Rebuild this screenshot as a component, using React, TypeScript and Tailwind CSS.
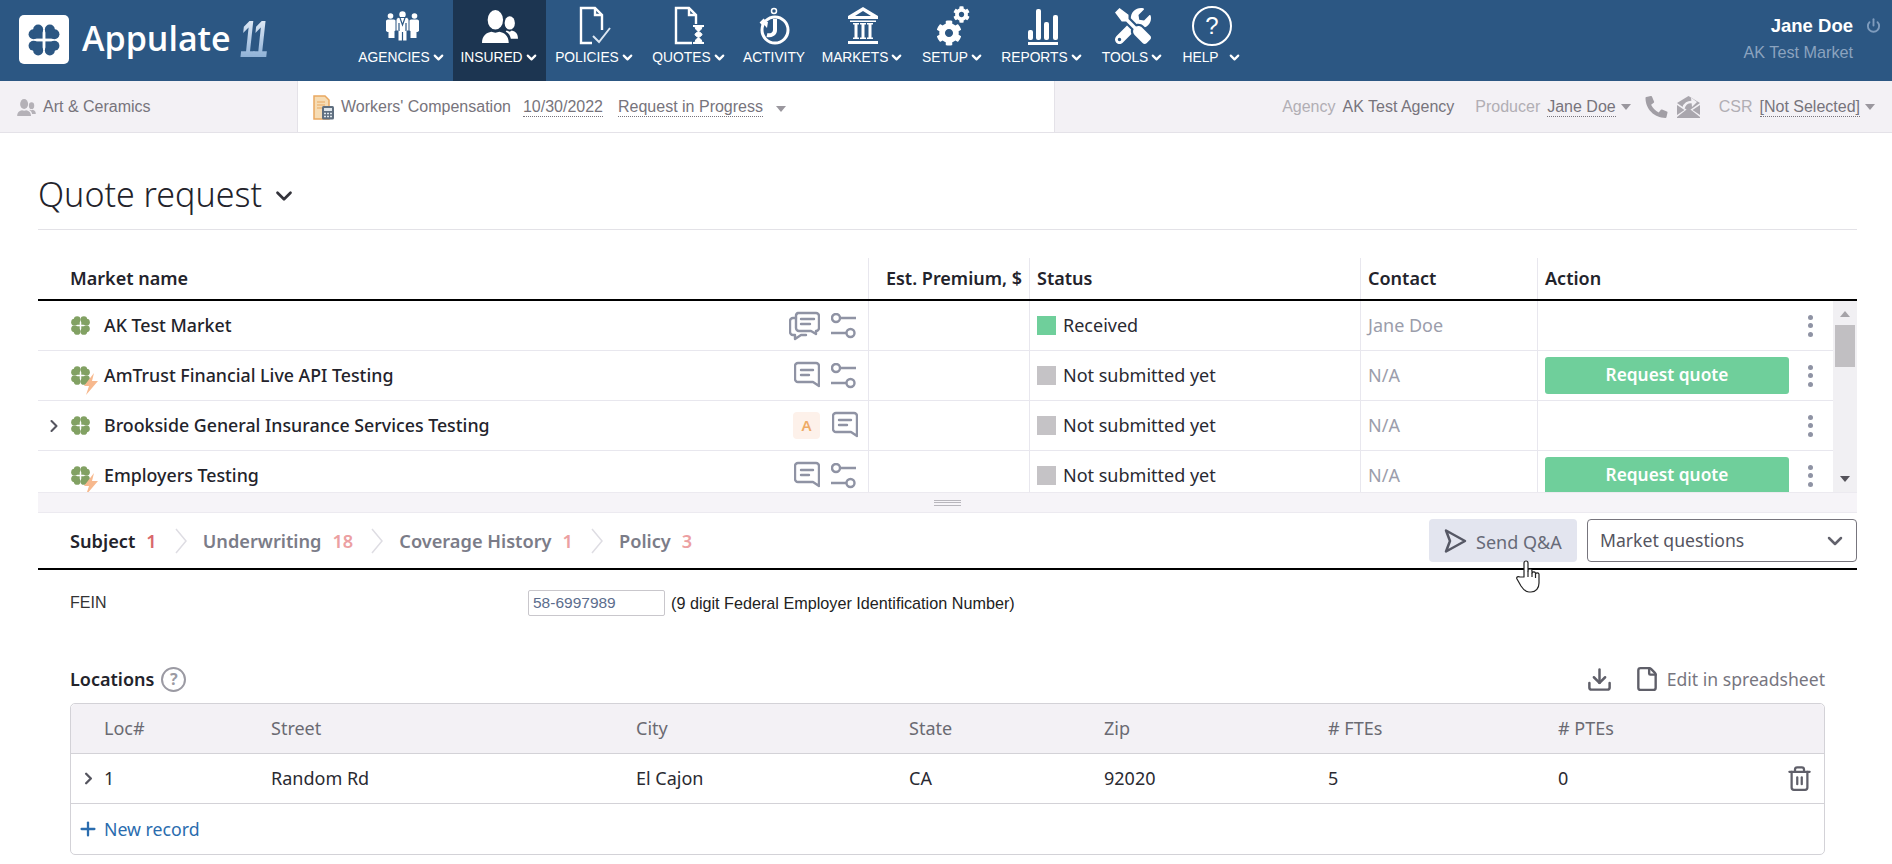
import React from 'react';
import { ChevronDown, ChevronRight, Download, File, Plus, Power, Trash2 } from 'lucide-react';
import { FaCog, FaTools, FaPhoneAlt } from 'react-icons/fa';

function Clover({ size, fill, gap = 0, r = 6 }: { size: number; fill: string; gap?: number; r?: number }) {
  return (
    <svg width={size} height={size} viewBox="0 0 48 48">
      {[0, 90, 180, 270].map((a) => (
        <g key={a} transform={`rotate(${a} 24 24)`} fill={fill}>
          <circle cx="11.5" cy="17" r={r} />
          <circle cx="17" cy="11.5" r={r} />
          <rect x="11.5" y="11.5" width={11.5 - gap} height={11.5 - gap} />
        </g>
      ))}
    </svg>
  );
}

function PeopleIcon({ className }: { className: string }) {
  return (
    <svg viewBox="0 0 35 32" fill="currentColor" className={className}>
      <ellipse cx="13" cy="9.500" rx="7.500" ry="9.500" />
      <path d="M0 32c0-8 5-10 9-11l4 1 4-1c4 1 9 3 9 11z" />
      <ellipse cx="27" cy="12.500" rx="5" ry="6.500" />
      <path d="M24 20l3 1 2-1c3 1 6 2 6 8h-7c-.5-3-2-6-5-7z" />
    </svg>
  );
}

function PolicyIcon() {
  return (
    <svg width="34" height="40" viewBox="0 0 34 40" fill="none" stroke="#fff" strokeWidth="2.4">
      <path d="M14 37H3V2h14l7 7v15" />
      <path d="M17 2v7h7" />
      <path d="M15 30l6 6 11-14" strokeWidth="2" stroke="#dbe6f2" />
    </svg>
  );
}

function QuoteIcon() {
  return (
    <svg width="34" height="40" viewBox="0 0 34 40" fill="none" stroke="#fff" strokeWidth="2.4">
      <path d="M19 37H3V2h13l7 7v9" />
      <path d="M16 2v7h7" />
      <path d="M20 20h11M20 37h11" strokeWidth="2" />
      <path d="M22 20c0 6 7 6 7 8.500s-7 2.500-7 8.500h7c0-6-7-6-7-8.500s7-2.500 7-8.500z" fill="#fff" strokeWidth="1" />
    </svg>
  );
}

function ActivityIcon() {
  return (
    <svg width="34" height="40" viewBox="0 0 34 40" fill="none" stroke="#fff" strokeWidth="3">
      <circle cx="17" cy="4" r="2.500" strokeWidth="1.500" />
      <circle cx="18" cy="23" r="13" />
      <path d="M8 13l-4 4M18 12v11c0 4-4 6-8 5" strokeWidth="4" />
      <path d="M4 14l7 1-1 6z" fill="#fff" stroke="none" />
    </svg>
  );
}

function MarketIcon() {
  return (
    <svg width="32" height="40" viewBox="0 0 32 40" fill="#fff">
      <path d="M16 1L1 10v3h30v-3zM16 5l8 5H8z" fillRule="evenodd" />
      <rect x="3" y="14.500" width="26" height="1.500" />
      <path d="M6 17h6v1.500h-1.500v13H12V33H6v-1.500h1.500v-13H6zM13 17h6v1.500h-1.500v13H19V33h-6v-1.500h1.500v-13H13zM20 17h6v1.500h-1.500v13H26V33h-6v-1.500h1.500v-13H20z" />
      <rect x="1" y="35" width="30" height="3" />
    </svg>
  );
}

function SetupIcon() {
  return (
    <div className="relative h-10 w-[34px]">
      <FaCog className="absolute bottom-0 left-0 h-[26px] w-[26px] text-white" />
      <FaCog className="absolute right-0 top-0 h-[17px] w-[17px] text-white" />
    </div>
  );
}

function ReportIcon() {
  return (
    <svg width="34" height="40" viewBox="0 0 34 40" fill="#fff">
      <rect x="2" y="36" width="30" height="3" />
      <rect x="2" y="24" width="5" height="10" rx="2" />
      <rect x="10" y="3" width="5" height="31" rx="2" />
      <rect x="18" y="16" width="5" height="18" rx="2" />
      <rect x="27" y="9" width="5" height="25" rx="2" />
    </svg>
  );
}

function HelpIcon() {
  return (
    <div className="flex h-10 w-10 items-center justify-center rounded-full border-[2.5px] border-white font-['Liberation_Sans',sans-serif] text-[24px] leading-none text-white">
      ?
    </div>
  );
}

function AgencyIcon() {
  const side = (
    <g>
      <circle cx="5.500" cy="5" r="2.800" />
      <path d="M1 11a2 2 0 0 1 2-2.500h6l2 1v10l-1.500.5v7H3.500v-6H2.500L1 20z" />
    </g>
  );
  return (
    <svg width="35" height="30" viewBox="0 0 35 30" fill="#fff">
      {side}
      <g transform="translate(35 0) scale(-1 1)">{side}</g>
      <circle cx="17.500" cy="3.500" r="3.200" />
      <path d="M11 9a2.500 2.500 0 0 1 2.500-2.500h8A2.500 2.500 0 0 1 24 9v11h-2v10h-9V20h-2z" stroke="#2c5783" strokeWidth="1" />
      <path d="M15 7l2.500 7 2.500-7M14 12v8M21 12v8M17.500 21v9" fill="none" stroke="#2c5783" strokeWidth="1.200" />
    </svg>
  );
}

const navItems = [
  { label: 'AGENCIES', w: 'w-[102px]', icon: <AgencyIcon />, arrow: true },
  { label: 'INSURED', w: 'w-[93px]', icon: <PeopleIcon className="h-[33px] w-[36px] text-white" />, arrow: true, active: true },
  { label: 'POLICIES', w: 'w-[98px]', icon: <PolicyIcon />, arrow: true },
  { label: 'QUOTES', w: 'w-[91px]', icon: <QuoteIcon />, arrow: true },
  { label: 'ACTIVITY', w: 'w-[78px]', icon: <ActivityIcon />, arrow: false },
  { label: 'MARKETS', w: 'w-[100px]', icon: <MarketIcon />, arrow: true },
  { label: 'SETUP', w: 'w-[80px]', icon: <SetupIcon />, arrow: true },
  { label: 'REPORTS', w: 'w-[99px]', icon: <ReportIcon />, arrow: true },
  { label: 'TOOLS', w: 'w-[82px]', icon: <FaTools className="h-[38px] w-[36px] text-white" />, arrow: true },
  { label: 'HELP', w: 'w-[76px]', icon: <HelpIcon />, arrow: true },
];

function TopBar() {
  return (
    <header className="flex h-[81px] bg-[#2c5783] font-['Liberation_Sans',sans-serif]">
      <div className="flex w-[351px] items-center pl-[19px]">
        <div className="mb-[2px] flex h-[49px] w-[50px] items-center justify-center rounded-[5px] bg-white">
          <Clover size={40} fill="#2c5783" gap={0.7} />
        </div>
        <span className="mb-[6px] ml-[13px] font-['Open_Sans',sans-serif] text-[34px] font-semibold leading-none text-white">Appulate</span>
        <span className="-mr-[22px] mb-[4px] ml-[9px] inline-block w-[56px] origin-left scale-x-[0.56] bg-gradient-to-b from-[#eef4fb] to-[#7fa6d0] bg-clip-text pr-[4px] font-['Liberation_Sans',sans-serif] text-[52px] font-bold italic leading-none tracking-[-3px] text-transparent">
          11
        </span>
      </div>
      <nav className="flex">
        {navItems.map((item) => (
          <div key={item.label} className={`flex ${item.w} flex-col items-center justify-end pb-[16px] ${item.active ? 'bg-[#1c3551]' : ''}`}>
            <div className="mb-[4px] flex h-10 items-center justify-center">{item.icon}</div>
            <div className="flex items-center text-[13.8px] leading-none text-white">
              {item.label}
              {item.arrow && <ChevronDown className={`h-[15px] w-[15px] ${item.label === 'HELP' ? 'ml-[8px]' : 'ml-[1px]'}`} strokeWidth={3.5} />}
            </div>
          </div>
        ))}
      </nav>
      <div className="ml-auto flex flex-col items-end pr-[39px] pt-[13px]">
        <div className="relative text-[18.500px] font-bold leading-[26px] text-white">
          Jane Doe
          <Power className="absolute -right-[28px] top-[5px] h-[15px] w-[15px] text-[#7f9cbd]" strokeWidth={3} />
        </div>
        <div className="mt-[2px] text-[16.200px] leading-[22px] text-[#8ba3bf]">AK Test Market</div>
      </div>
    </header>
  );
}

function Caret() {
  return <span className="ml-[5px] inline-block h-0 w-0 border-x-[5px] border-t-[6px] border-x-transparent border-t-[#9a979e]" />;
}

function CompIcon() {
  return (
    <svg width="22" height="25" viewBox="0 0 22 25" className="mr-[6px]">
      <path d="M1 1h11l4 4v19H1z" fill="#f6dcb4" stroke="#e9a860" strokeWidth="1.500" />
      <path d="M4 7h8M4 10h8M4 13h5" stroke="#e9a860" strokeWidth="1" />
      <rect x="9" y="11" width="12" height="13.500" rx="1.500" fill="#5f6f80" />
      <rect x="11" y="13" width="8" height="3" fill="#dfe6ec" />
      <path d="M11 18.500h8M11 21.500h8" stroke="#dfe6ec" strokeWidth="1.500" strokeDasharray="2 1" />
    </svg>
  );
}

function MailForwardIcon() {
  return (
    <svg width="23" height="22" viewBox="0 0 23 22" className="ml-[9px]" fill="#a9a6ad">
      <path d="M0 7L11.500 0 23 7l-11.500 8z" />
      <path d="M0 9v10l7.500-5zM23 9v10l-7.500-5zM11.500 12L0 21v1h23v-1z" />
      <path d="M6.500 12c1-4 4.500-6.500 9-6" fill="none" stroke="#f3f1f5" strokeWidth="2.500" />
      <path d="M14 1.500l6 4.500-5 5z" fill="#f3f1f5" />
    </svg>
  );
}

function SubBar() {
  return (
    <div className="flex h-[52px] items-center border-b border-[#e4e2e8] bg-[#f3f1f5] font-['Liberation_Sans',sans-serif] text-[16px] text-[#77747c]">
      <div className="flex h-full w-[297px] items-center pl-[16px] pt-[1px]">
        <PeopleIcon className="mr-[6px] h-[17px] w-[21px] text-[#b4b1b7]" />
        Art &amp; Ceramics
      </div>
      <div className="flex h-full w-[758px] items-center border-x border-[#e4e2e8] bg-white pl-[15px] pt-[1px]">
        <CompIcon />
        Workers' Compensation
        <span className="ml-[12px] border-b border-dotted border-[#77747c] leading-[18px]">10/30/2022</span>
        <span className="ml-[15px] border-b border-dotted border-[#77747c] leading-[18px]">Request in Progress</span>
        <span className="ml-[8px]"><Caret /></span>
      </div>
      <div className="flex flex-1 items-center justify-end pr-[17px] pt-[1px]">
        <span className="text-[#b1aeb4]">Agency</span>
        <span className="ml-[7px]">AK Test Agency</span>
        <span className="ml-[21px] text-[#b1aeb4]">Producer</span>
        <span className="ml-[7px] border-b border-dotted border-[#77747c] leading-[18px]">Jane Doe</span>
        <Caret />
        <FaPhoneAlt className="ml-[14px] h-[22px] w-[23px] text-[#a19ea5]" />
        <MailForwardIcon />
        <span className="ml-[19px] text-[#b1aeb4]">CSR</span>
        <span className="ml-[7px] border-b border-dotted border-[#77747c] leading-[18px]">[Not Selected]</span>
        <Caret />
      </div>
    </div>
  );
}

function CommentIcon({ double }: { double?: boolean }) {
  return (
    <svg width={double ? 31 : 26} height="30" viewBox={double ? '0 0 31 30' : '0 0 26 30'} fill="none" stroke="#8f93a4" strokeWidth="2.400" strokeLinejoin="round" strokeLinecap="round">
      {double ? (
        <g>
          <path d="M9 2h18a3 3 0 0 1 3 3v12a3 3 0 0 1-3 3v3l-5-3H10a3 3 0 0 1-3-3V5a3 3 0 0 1 2-3z" />
          <path d="M12 8h13M12 13h9" />
          <path d="M7 7H4a3 3 0 0 0-3 3v11a3 3 0 0 0 3 3h2v4l6-4h5" />
        </g>
      ) : (
        <g>
          <path d="M4 2h18a3 3 0 0 1 3 3v20l-6-4H4a3 3 0 0 1-3-3V5a3 3 0 0 1 3-3z" />
          <path d="M7 9h12M7 14h8" />
        </g>
      )}
    </svg>
  );
}

function SlidersIcon() {
  return (
    <svg width="25" height="26" viewBox="0 0 25 26" fill="none" stroke="#8f93a4" strokeWidth="2.400">
      <circle cx="5" cy="5" r="4" />
      <path d="M9 5h16M0 20h15" />
      <circle cx="19.500" cy="20" r="4" />
    </svg>
  );
}

function Dots() {
  return (
    <div className="flex flex-col gap-[3.500px]">
      <span className="h-[5px] w-[5px] rounded-full bg-[#8f93a4]" />
      <span className="h-[5px] w-[5px] rounded-full bg-[#8f93a4]" />
      <span className="h-[5px] w-[5px] rounded-full bg-[#8f93a4]" />
    </div>
  );
}

type Market = {
  name: string;
  bolt?: boolean;
  expand?: boolean;
  badge?: boolean;
  dbl?: boolean;
  status: string;
  green?: boolean;
  contact: string;
  request?: boolean;
};

const markets: Market[] = [
  { name: 'AK Test Market', dbl: true, status: 'Received', green: true, contact: 'Jane Doe' },
  { name: 'AmTrust Financial Live API Testing', bolt: true, status: 'Not submitted yet', contact: 'N/A', request: true },
  { name: 'Brookside General Insurance Services Testing', expand: true, badge: true, status: 'Not submitted yet', contact: 'N/A' },
  { name: 'Employers Testing', bolt: true, status: 'Not submitted yet', contact: 'N/A', request: true },
];

function MarketRow({ m }: { m: Market }) {
  return (
    <div className="grid h-[50px] grid-cols-[830px_161px_331px_177px_296px] border-b border-[#e8e7ee] text-[18px] leading-none">
      <div className="flex items-center">
        <div className="flex w-[31px] justify-center pl-[1px]">
          {m.expand && <ChevronRight className="h-[20px] w-[20px] text-[#55555f]" strokeWidth={2.500} />}
        </div>
        <div className="relative h-[23px] w-[23px]">
          <Clover size={23} fill="#82a163" gap={0.6} r={7} />
          {m.bolt && (
            <svg width="16" height="22" viewBox="0 0 16 22" className="absolute left-[14px] top-[9px]">
              <path d="M11 0L1 13h5l-3 9 12-14H9z" fill="#f7b98e" />
            </svg>
          )}
        </div>
        <span className="ml-[12px] text-[17.800px] font-medium text-[#23232b]">{m.name}</span>
        <div className="ml-auto flex items-center">
          {m.badge ? (
            <div className="mr-[10px] flex items-center">
              <span className="flex h-[27px] w-[27px] items-center justify-center rounded-[4px] bg-[#fdf1ea] text-[15px] font-semibold text-[#eeaa66]">A</span>
              <span className="ml-[12px]"><CommentIcon /></span>
            </div>
          ) : (
            <div className="mr-[12px] flex items-center">
              <CommentIcon double={m.dbl} />
              <span className="ml-[11px]"><SlidersIcon /></span>
            </div>
          )}
        </div>
      </div>
      <div className="border-l border-[#e8e7ee]" />
      <div className="flex items-center border-l border-[#e8e7ee] pl-[7px]">
        <span className={`h-[19px] w-[19px] ${m.green ? 'bg-[#6fcf9b]' : 'bg-[#c5c3c6]'}`} />
        <span className="mb-[2px] ml-[7px] text-[#2a2a32]">{m.status}</span>
      </div>
      <div className="flex items-center border-l border-[#e8e7ee] pb-[2px] pl-[7px] text-[#9b9dab]">{m.contact}</div>
      <div className="flex items-center border-l border-[#e8e7ee] pl-[7px]">
        {m.request && (
          <div className="flex h-[37px] w-[244px] items-center justify-center rounded-[3px] bg-[#6fcf9b] pb-[1px] text-[17.300px] font-semibold text-white">Request quote</div>
        )}
        <div className="absolute left-[1808px]"><Dots /></div>
      </div>
    </div>
  );
}

function MarketTable() {
  return (
    <div className="mt-[28px] w-[1819px]">
      <div className="grid h-[43px] grid-cols-[830px_161px_331px_177px_320px] border-b-2 border-black text-[18px] font-semibold text-[#23232b]">
        <div className="flex items-center pl-[32px]">Market name</div>
        <div className="flex items-center justify-end border-l border-[#e8e7ee] pr-[7px]">Est. Premium, $</div>
        <div className="flex items-center border-l border-[#e8e7ee] pl-[7px]">Status</div>
        <div className="flex items-center border-l border-[#e8e7ee] pl-[7px]">Contact</div>
        <div className="flex items-center border-l border-[#e8e7ee] pl-[7px]">Action</div>
      </div>
      <div className="flex h-[191px] overflow-hidden">
        <div className="w-[1795px]">
          {markets.map((m) => (
            <MarketRow key={m.name} m={m} />
          ))}
        </div>
        <div className="flex w-[24px] flex-col items-center bg-[#f1f0f3]">
          <span className="mt-[10px] h-0 w-0 border-x-[5px] border-b-[6px] border-x-transparent border-b-[#a5a3a8]" />
          <span className="mt-[8px] h-[42px] w-[20px] bg-[#c1bfc2]" />
          <span className="mt-auto mb-[10px] h-0 w-0 border-x-[5px] border-t-[6px] border-x-transparent border-t-[#55535a]" />
        </div>
      </div>
      <div className="flex h-[21px] items-center justify-center border-y border-[#eceaf0] bg-[#f6f4f8]">
        <div className="h-[6px] w-[27px] border-y border-[#b8b6bc]">
          <div className="mt-[1px] h-px bg-[#b8b6bc]" />
        </div>
      </div>
    </div>
  );
}

const tabs = [
  { label: 'Subject', count: '1', active: true },
  { label: 'Underwriting', count: '18' },
  { label: 'Coverage History', count: '1' },
  { label: 'Policy', count: '3' },
];

function Tabs() {
  return (
    <div className="flex h-[57px] w-[1819px] items-center border-b-2 border-black pl-[32px]">
      {tabs.map((t, i) => (
        <div key={t.label} className="flex items-center pt-[2px] text-[18.200px] font-semibold">
          <span className={t.active ? 'text-[#23232b]' : 'text-[#7b7c88]'}>{t.label}</span>
          <span className={`ml-[11px] ${t.active ? 'text-[#d9686b]' : 'text-[#eca0a2]'}`}>{t.count}</span>
          {i < 3 && (
            <svg width="12" height="26" viewBox="0 0 12 26" fill="none" stroke="#dedde3" strokeWidth="1.500" className="ml-[18px] mr-[16px]">
              <path d="M1 1l10 12L1 25" />
            </svg>
          )}
        </div>
      ))}
      <div className="ml-auto flex items-center gap-[10px]">
        <div className="flex h-[43px] w-[148px] items-center rounded-[4px] bg-[#e3e5ef] pl-[15px] pt-[3px] text-[18px] text-[#676a78]">
          <svg width="23" height="26" viewBox="0 0 23 26" fill="none" stroke="#565865" strokeWidth="2.500" strokeLinejoin="round" className="-mt-[3px] mr-[9px]">
            <path d="M2 2.500L21 13 2 23.500 6 13z" />
          </svg>
          Send Q&amp;A
        </div>
        <div className="flex h-[43px] w-[270px] items-center justify-between rounded-[4px] border border-[#77757d] bg-white pl-[12px] pr-[9px] text-[17.600px] text-[#55555f]">
          Market questions
          <ChevronDown className="h-[24px] w-[24px] text-[#62626c]" strokeWidth={2.500} />
        </div>
      </div>
    </div>
  );
}

function FeinRow() {
  return (
    <div className="flex h-[26px] items-center pl-[32px] font-['Liberation_Sans',sans-serif] text-[16.200px] text-[#222]">
      <span className="w-[458px] text-[16px] text-[#333]">FEIN</span>
      <div className="flex h-[26px] w-[137px] items-center rounded-[2px] border border-[#c9c7cc] pl-[4px] text-[15.500px] text-[#5b6d8d]">58-6997989</div>
      <span className="ml-[6px]">(9 digit Federal Employer Identification Number)</span>
    </div>
  );
}

const locCols = 'grid grid-cols-[200px_365px_273px_195px_224px_230px_266px]';

function Locations() {
  return (
    <div className="ml-[32px] mt-[47px] w-[1755px] self-start">
      <div className="flex h-[32px] items-center">
        <span className="text-[18px] font-semibold text-[#23232b]">Locations</span>
        <span className="ml-[7px] flex h-[25px] w-[25px] items-center justify-center rounded-full border-2 border-[#9b9aa3] text-[16px] font-bold leading-none text-[#9b9aa3]">?</span>
        <div className="ml-auto flex items-center text-[17.600px] text-[#77767f]">
          <Download className="h-[27px] w-[27px] text-[#5f5f69]" strokeWidth={2.200} />
          <File className="ml-[21px] h-[26px] w-[26px] text-[#5f5f69]" strokeWidth={2.200} />
          <span className="ml-[7px]">Edit in spreadsheet</span>
        </div>
      </div>
      <div className="mt-[8px] rounded-[5px] border border-[#d3d2d7] text-[18px]">
        <div className={`${locCols} h-[50px] items-center rounded-t-[5px] border-b border-[#d3d2d7] bg-[#f3f1f5] text-[#6a6a72]`}>
          <div className="pl-[33px]">Loc#</div>
          <div>Street</div>
          <div>City</div>
          <div>State</div>
          <div>Zip</div>
          <div># FTEs</div>
          <div># PTEs</div>
        </div>
        <div className={`${locCols} h-[50px] items-center border-b border-[#d3d2d7] text-[#2a2a32]`}>
          <div className="flex items-center pl-[8px]">
            <ChevronRight className="h-[19px] w-[19px] text-[#55555f]" strokeWidth={3} />
            <span className="ml-[6px]">1</span>
          </div>
          <div>Random Rd</div>
          <div>El Cajon</div>
          <div>CA</div>
          <div>92020</div>
          <div>5</div>
          <div className="flex items-center justify-between pr-[11px]">
            0
            <Trash2 className="h-[27px] w-[27px] text-[#5f5f69]" strokeWidth={2} />
          </div>
        </div>
        <div className="flex h-[50px] items-center pl-[6px] text-[17.700px] text-[#2a6cae]">
          <Plus className="h-[22px] w-[22px]" strokeWidth={2.500} />
          <span className="ml-[5px]">New record</span>
        </div>
      </div>
    </div>
  );
}

function HandCursor() {
  return (
    <svg width="27" height="33" viewBox="0 0 27 33" fill="#fff" stroke="#222" strokeWidth="1.200" strokeLinejoin="round">
      <path d="M9 17V3a2 2 0 0 1 4 0v8a2 2 0 0 1 4 0v2a2 2 0 0 1 3.500 0v1a2 2 0 0 1 3.500 0v9c0 5-3 9-8 9h-2c-4 0-6-3-8-6l-4-7c-1-2 1-3 3-2z" />
      <path d="M13 11v6M17 13v4M20.500 14v4" fill="none" />
    </svg>
  );
}

export default function App() {
  return (
    <div className="relative h-[864px] w-[1892px] overflow-hidden bg-white font-['Noto_Sans',sans-serif]">
      <TopBar />
      <SubBar />
      <main className="flex flex-col pl-[38px]">
        <div className="flex h-[97px] w-[1819px] items-center border-b border-[#e3e2e7] pt-[26px] text-[#23232b]">
          <h1 className="text-[34px] font-light leading-none">Quote request</h1>
          <ChevronDown className="ml-[9px] mt-[3px] h-[26px] w-[26px] text-[#33333b]" strokeWidth={2.500} />
        </div>
        <MarketTable />
        <Tabs />
        <div className="mt-[20px]"><FeinRow /></div>
        <Locations />
      </main>
      <div className="absolute left-[1515px] top-[560px]">
        <HandCursor />
      </div>
    </div>
  );
}
